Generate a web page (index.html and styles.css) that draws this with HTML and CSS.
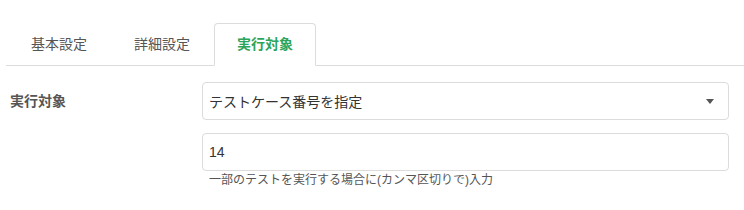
FILE: index.html
```html
<!DOCTYPE html>
<html lang="ja">
<head>
<meta charset="utf-8">
<link rel="stylesheet" href="styles.css">
</head>
<body>
<div class="page">
  <ul class="tabs">
    <li class="tab">基本設定</li>
    <li class="tab">詳細設定</li>
    <li class="tab active">実行対象</li>
  </ul>
  <div class="form-row">
    <div class="label">実行対象</div>
    <div class="field">
      <div class="select"><span>テストケース番号を指定</span><span class="caret"></span></div>
      <div class="input">14</div>
      <div class="help">一部のテストを実行する場合に(カンマ区切りで)入力</div>
    </div>
  </div>
</div>
</body>
</html>
```
FILE: styles.css
```css
html, body {
  margin: 0;
  background: #fff;
  font-family: "Liberation Sans", "Noto Sans CJK JP", sans-serif;
  font-size: 14px;
  color: #333;
}
.page {
  padding: 23px 0 0 6px;
}
.tabs {
  display: flex;
  list-style: none;
  margin: 0;
  padding: 0 0 0 2px;
  border-bottom: 1px solid #dcdcdc;
}
.tab {
  height: 41px;
  line-height: 41px;
  padding: 0 22px;
  margin-right: 1px;
  margin-bottom: -1px;
  border: 1px solid transparent;
  border-radius: 4px 4px 0 0;
  color: #555;
}
.tab.active {
  border-color: #dcdcdc;
  border-bottom-color: #fff;
  background: #fff;
  color: #2ca45a;
  font-weight: bold;
}
.form-row {
  display: grid;
  grid-template-columns: 192px 1fr;
  padding: 16px 15px 0 4px;
}
.label {
  line-height: 38px;
  font-weight: bold;
  color: #555;
}
.select, .input {
  box-sizing: border-box;
  height: 38px;
  border: 1px solid #dcdcdc;
  border-radius: 4px;
  padding: 0 14px 0 6px;
  display: flex;
  align-items: center;
  color: #333;
}
.select {
  justify-content: space-between;
}
.caret {
  width: 0;
  height: 0;
  border-left: 4.5px solid transparent;
  border-right: 4.5px solid transparent;
  border-top: 5px solid #555;
}
.input {
  margin-top: 13px;
}
.help {
  font-size: 12px;
  line-height: 18px;
  color: #555;
  padding-left: 7px;
}
```
